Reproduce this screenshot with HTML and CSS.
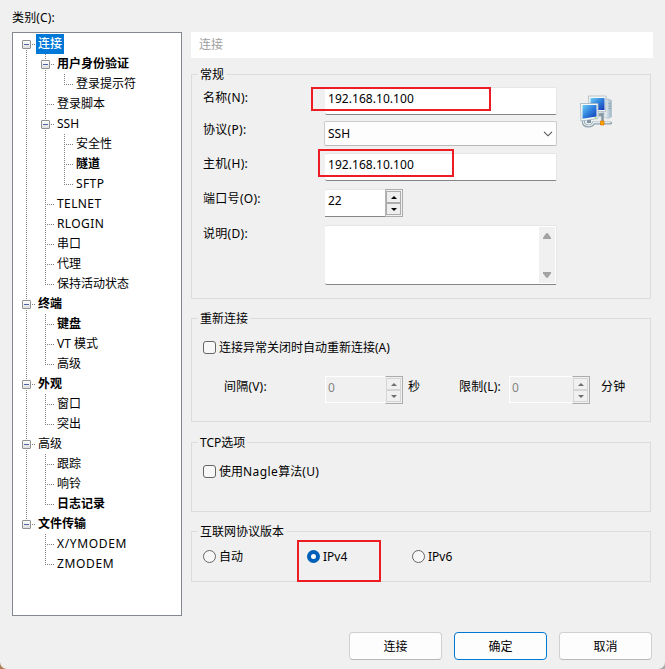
FILE: index.html
```html
<!DOCTYPE html>
<html lang="zh-CN">
<head>
<meta charset="utf-8">
<title>连接属性</title>
<link rel="stylesheet" href="styles.css">
</head>
<body>
<div class="dialog">
  <div class="category">类别(C):</div>
  <div class="columns">
    <nav class="tree">
      <ul class="root">
        <li><div class="node open"><span class="sel">连接</span></div>
          <ul>
            <li><div class="node open"><b>用户身份验证</b></div>
              <ul><li><div class="node"><span>登录提示符</span></div></li></ul>
            </li>
            <li><div class="node"><span>登录脚本</span></div></li>
            <li><div class="node open"><span>SSH</span></div>
              <ul>
                <li><div class="node"><span>安全性</span></div></li>
                <li><div class="node"><b>隧道</b></div></li>
                <li><div class="node"><span class="caps">SFTP</span></div></li>
              </ul>
            </li>
            <li><div class="node"><span class="caps">TELNET</span></div></li>
            <li><div class="node"><span class="caps">RLOGIN</span></div></li>
            <li><div class="node"><span>串口</span></div></li>
            <li><div class="node"><span>代理</span></div></li>
            <li><div class="node"><span>保持活动状态</span></div></li>
          </ul>
        </li>
        <li><div class="node open"><b>终端</b></div>
          <ul>
            <li><div class="node"><b>键盘</b></div></li>
            <li><div class="node"><span>VT 模式</span></div></li>
            <li><div class="node"><span>高级</span></div></li>
          </ul>
        </li>
        <li><div class="node open"><b>外观</b></div>
          <ul>
            <li><div class="node"><span>窗口</span></div></li>
            <li><div class="node"><span>突出</span></div></li>
          </ul>
        </li>
        <li><div class="node open"><span>高级</span></div>
          <ul>
            <li><div class="node"><span>跟踪</span></div></li>
            <li><div class="node"><span>响铃</span></div></li>
            <li><div class="node"><b>日志记录</b></div></li>
          </ul>
        </li>
        <li><div class="node open"><b>文件传输</b></div>
          <ul>
            <li><div class="node"><span class="caps-wide">X/YMODEM</span></div></li>
            <li><div class="node"><span class="caps-wide">ZMODEM</span></div></li>
          </ul>
        </li>
      </ul>
    </nav>

    <main class="page">
      <div class="banner">连接</div>

      <fieldset class="general">
        <legend>常规</legend>
        <div class="form">
          <label>名称(N):</label>
          <div class="input">192.168.10.100</div>
          <label>协议(P):</label>
          <div class="combo">SSH
            <svg width="10" height="6" viewBox="0 0 10 6"><path d="M1 .8 5 4.8 9 .8" fill="none" stroke="#555" stroke-width="1.1"/></svg>
          </div>
          <label>主机(H):</label>
          <div class="input">192.168.10.100</div>
          <label>端口号(O):</label>
          <div class="spin"><div class="value">22</div><div class="arrows"><i class="up"></i><i class="down"></i></div></div>
          <label>说明(D):</label>
          <div class="area"><div class="scroll">
            <svg width="8" height="6" viewBox="0 0 8 6"><path d="M0 6V4.8L3 .4Q4-.4 5 .4L8 4.8V6z" fill="#a3a3a3"/></svg>
            <svg width="8" height="6" viewBox="0 0 8 6"><path d="M0 0V1.2L3 5.6Q4 6.4 5 5.6L8 1.2V0z" fill="#a3a3a3"/></svg>
          </div></div>
        </div>
        <svg class="hosts" width="34" height="34" viewBox="0 0 34 34">
          <defs>
            <linearGradient id="screen" x1="0" y1="0" x2="1" y2="1"><stop offset="0" stop-color="#6ccdf5"/><stop offset=".5" stop-color="#2f7fdc"/><stop offset="1" stop-color="#1238b4"/></linearGradient>
            <linearGradient id="tower" x1="0" x2="1"><stop offset="0" stop-color="#f4f8fa"/><stop offset="1" stop-color="#9db6c6"/></linearGradient>
          </defs>
          <path d="M25 4.5 29 3.8 32.500 5.500V22L29 23.500 25 22z" fill="url(#tower)" stroke="#a9bcc8" stroke-width=".6"/>
          <path d="M29.500 8.500 32 9M29.500 11 32 11.500M29.500 13.500 32 14" stroke="#7893a4" stroke-width=".7"/>
          <path d="M9.500 1H27L26.500 16.500H10z" fill="#f5f7f8" stroke="#a8b8c0" stroke-width=".8"/>
          <path d="M11.500 3H25.500V15H11.500z" fill="url(#screen)"/>
          <path d="M19.500 18 25 17.500V29H22V21.500H19.500z" fill="#8799a5" stroke="#cbd6dc" stroke-width=".6"/>
          <path d="M4.500 26Q4 31 9.500 31Q13.500 31 14.500 28H31.500" fill="none" stroke="#8ea1ad" stroke-width="3.200" stroke-linecap="round"/>
          <path d="M4.500 26Q4 30.500 9.500 30.500Q13.500 30.500 14.500 27.500H31" fill="none" stroke="#e5eced" stroke-width="1.300" stroke-linecap="round"/>
          <path d="M8 25H12V28H8z" fill="#7f92a1"/>
          <path d="M1.500 8.500H19V23.500L2 26z" fill="#f8fafa" stroke="#9eb1bd" stroke-width=".8"/>
          <path d="M3.500 10H17.500V21.500L3.500 23.700z" fill="url(#screen)"/>
          <path d="M15.500 22.300H17.500V23.300H15.500z" fill="#8bd832"/>
          <path d="M21.500 26H25V30H21.500z" fill="#ffa500" stroke="#d87400" stroke-width=".7"/>
        </svg>
        <div class="mark mark-name"></div>
        <div class="mark mark-host"></div>
      </fieldset>

      <fieldset class="reconnect">
        <legend>重新连接</legend>
        <div class="option"><i class="check"></i>连接异常关闭时自动重新连接(A)</div>
        <div class="timing">
          <label class="interval">间隔(V):</label>
          <div class="spin off"><div class="value">0</div><div class="arrows"><i class="up"></i><i class="down"></i></div></div>
          <span class="unit">秒</span>
          <label class="limit">限制(L):</label>
          <div class="spin off wide"><div class="value">0</div><div class="arrows"><i class="up"></i><i class="down"></i></div></div>
          <span class="unit far">分钟</span>
        </div>
      </fieldset>

      <fieldset class="tcp">
        <legend>TCP选项</legend>
        <div class="option"><i class="check"></i><span>使用<span class="latin">Nagle</span>算法<span class="latin">(U)</span></span></div>
      </fieldset>

      <fieldset class="ipver">
        <legend>互联网协议版本</legend>
        <div class="radios">
          <div class="option"><i class="radio"></i>自动</div>
          <div class="option"><i class="radio on"></i>IPv4</div>
          <div class="option"><i class="radio"></i>IPv6</div>
        </div>
        <div class="mark mark-ip"></div>
      </fieldset>
    </main>
  </div>
  <footer>
    <button>连接</button>
    <button class="default">确定</button>
    <button>取消</button>
  </footer>
</div>
</body>
</html>
```
FILE: styles.css
```css
*, *::before, *::after { box-sizing: border-box; }
html { background: linear-gradient(90deg, #b07f55 50%, #aaa 50%); }
body {
  margin: 0;
  font: 12px/16px "Noto Sans", "Noto Sans CJK SC", sans-serif;
  color: #000;
}
ul { list-style: none; margin: 0; padding: 0; }
svg { display: block; }

.dialog {
  width: 665px;
  height: 669px;
  padding: 10px 12px 0;
  background: #f0f0f0;
  border-radius: 0 0 7px 7px;
  overflow: hidden;
}
.category { height: 22px; letter-spacing: .15px; }
.columns { display: flex; gap: 9px; height: 584px; }

/* category tree */
.tree {
  width: 170px;
  background: #fff;
  border: 1px solid #828790;
  padding: 1px 0 0 13px;
}
.tree li { position: relative; }
.tree li ul { padding-left: 19px; }
.tree li::before {
  content: "";
  position: absolute;
  left: 0;
  top: 0;
  bottom: 0;
  width: 1px;
  background: repeating-linear-gradient(#808080 0 1px, transparent 1px 2px);
}
.tree li:last-child::before { bottom: auto; height: 11px; }
.tree .root > li:first-child::before { top: 10px; }
.node {
  position: relative;
  display: flex;
  height: 20px;
  line-height: 20px;
  padding-left: 10px;
  white-space: nowrap;
}
.node::before {
  content: "";
  position: absolute;
  left: 0;
  top: 10px;
  width: 9px;
  height: 1px;
  background: repeating-linear-gradient(90deg, #808080 0 1px, transparent 1px 2px);
}
.node.open::after {
  content: "";
  position: absolute;
  left: -4px;
  top: 6px;
  width: 9px;
  height: 9px;
  border: 1px solid #919191;
  border-radius: 1px;
  background: linear-gradient(#4b63a7, #4b63a7) center / 5px 1px no-repeat, linear-gradient(#fff, #ddd);
}
.node span, .node b { padding: 0 2px; }
.node .sel { background: #0078d7; color: #fff; font-weight: 500; }
.caps { letter-spacing: .4px; }
.caps-wide { letter-spacing: .65px; }
.latin { letter-spacing: .4px; }

/* settings page */
.page { width: 462px; }
.banner {
  height: 26px;
  padding-left: 8px;
  line-height: 26px;
  background: #fff;
  color: #a0a0a0;
}
fieldset {
  position: relative;
  width: 460px;
  min-width: 0;
  margin: 0;
  padding: 0 0 0 6px;
  border: 1px solid #dcdcdc;
}
legend { height: 17px; line-height: 17px; padding: 0 2px; }
.general { height: 233px; margin-top: 8px; display: flex; }
.reconnect { height: 112px; margin-top: 11px; }
.tcp { height: 78px; margin-top: 12px; }
.ipver { height: 59px; margin-top: 11px; }

.form {
  display: grid;
  grid-template-columns: 121px 233px;
  grid-template-rows: 34px 32px 36px 36px 60px;
  padding: 4px 0 0 5px;
}
.form label { padding-top: 3px; letter-spacing: .3px; }
.form label:nth-of-type(4) { padding-top: 2px; }
.form label:nth-of-type(2), .form label:nth-of-type(5) { padding-top: 1px; }
.input, .area {
  width: 232px;
  margin-left: 1px;
  border: 1px solid #e6e6e6;
  border-left: 0;
  border-bottom-color: #858585;
  border-radius: 2px;
  background: #fff;
}
.input { height: 28px; padding-left: 3px; line-height: 21px; letter-spacing: .05px; }
.combo {
  display: flex;
  justify-content: space-between;
  align-items: center;
  height: 25px;
  padding: 0 3px 0 3px;
  border: 1px solid #ccc;
  border-bottom-color: #b8b8b8;
  border-radius: 2px;
  background: #fdfdfd;
}
.area { height: 60px; display: flex; justify-content: flex-end; padding: 1px; }
.scroll {
  width: 16px;
  padding: 6px 4px 5px;
  background: #f0f0f0;
  display: flex;
  flex-direction: column;
  justify-content: space-between;
}

.spin { display: flex; width: 78px; height: 28px; margin-left: 1px; }
.value {
  flex: 1;
  height: 28px;
  padding-left: 3px;
  line-height: 21px;
  background: #fff;
  border-top: 1px solid #e6e6e6;
  border-bottom: 1px solid #858585;
}
.arrows {
  width: 18px;
  height: 28px;
  padding: 1px 1px 1px 0;
  border: 1px solid #acacb0;
  border-left-color: #b4b4b4;
  display: flex;
  flex-direction: column;
}
.arrows i {
  flex: 1;
  border: 1px solid #acacac;
  background: #eee;
  display: flex;
  align-items: center;
  justify-content: center;
}
.arrows i::before { content: ""; border: 3px solid transparent; border-top-width: 0; border-bottom: 3px solid #000; }
.arrows .down::before { border-top: 3px solid #000; border-bottom-width: 0; }
.spin.off { margin-left: 0; }
.spin.wide { width: 81px; }
.off .value { height: 27px; background: #f0f0f0; color: #838383; border: 1px solid #fff; border-right: 0; line-height: 22px; padding-left: 2px; }
.off .arrows { border-left-color: #f0f0f0; }
.off .arrows i { border-color: #d5d5d5; background: #f0f0f0; }
.off .up::before { border-bottom-color: #6d6d6d; }
.off .down::before { border-top-color: #6d6d6d; }

.hosts { margin: 12px 0 0 22px; }

.option { display: flex; align-items: center; height: 16px; gap: 3px; white-space: nowrap; }
.check, .radio { width: 13px; height: 13px; margin-bottom: 2px; border: 1px solid #666; background: #f7f7f7; }
.check { border-radius: 3px; }
.radio { border-radius: 50%; }
.radio.on { border: 4px solid #005fb8; background: #fff; }
.reconnect .option, .tcp .option { margin: 13px 0 0 5px; }
.timing { display: flex; margin-top: 20px; }
.timing label, .unit { padding-top: 3px; letter-spacing: .2px; }
.interval { width: 127px; padding-left: 26px; }
.unit { width: 56px; padding-left: 5px; }
.limit { width: 50px; }
.unit.far { padding-left: 11px; }
.radios { display: grid; grid-template-columns: 104px 105px auto; margin: 9px 0 0 5px; }

/* highlight frames drawn over the controls */
.mark { position: absolute; border: 2px solid #ed1c24; }
.mark-name { left: 119px; top: 4px; width: 180px; height: 24px; }
.mark-host { left: 126px; top: 66px; width: 136px; height: 28px; }
.mark-ip { left: 105px; top: 0; width: 84px; height: 42px; }

footer { display: flex; justify-content: flex-end; gap: 12px; margin-top: 16px; padding-right: 1px; }
footer button {
  width: 93px;
  height: 28px;
  padding: 1px 0 0;
  border: 1px solid #d0d0d0;
  border-bottom-color: #b9b9b9;
  border-radius: 4px;
  background: #fdfdfd;
  font: inherit;
  color: #000;
}
footer .default { border-color: #0078d4; }
```
